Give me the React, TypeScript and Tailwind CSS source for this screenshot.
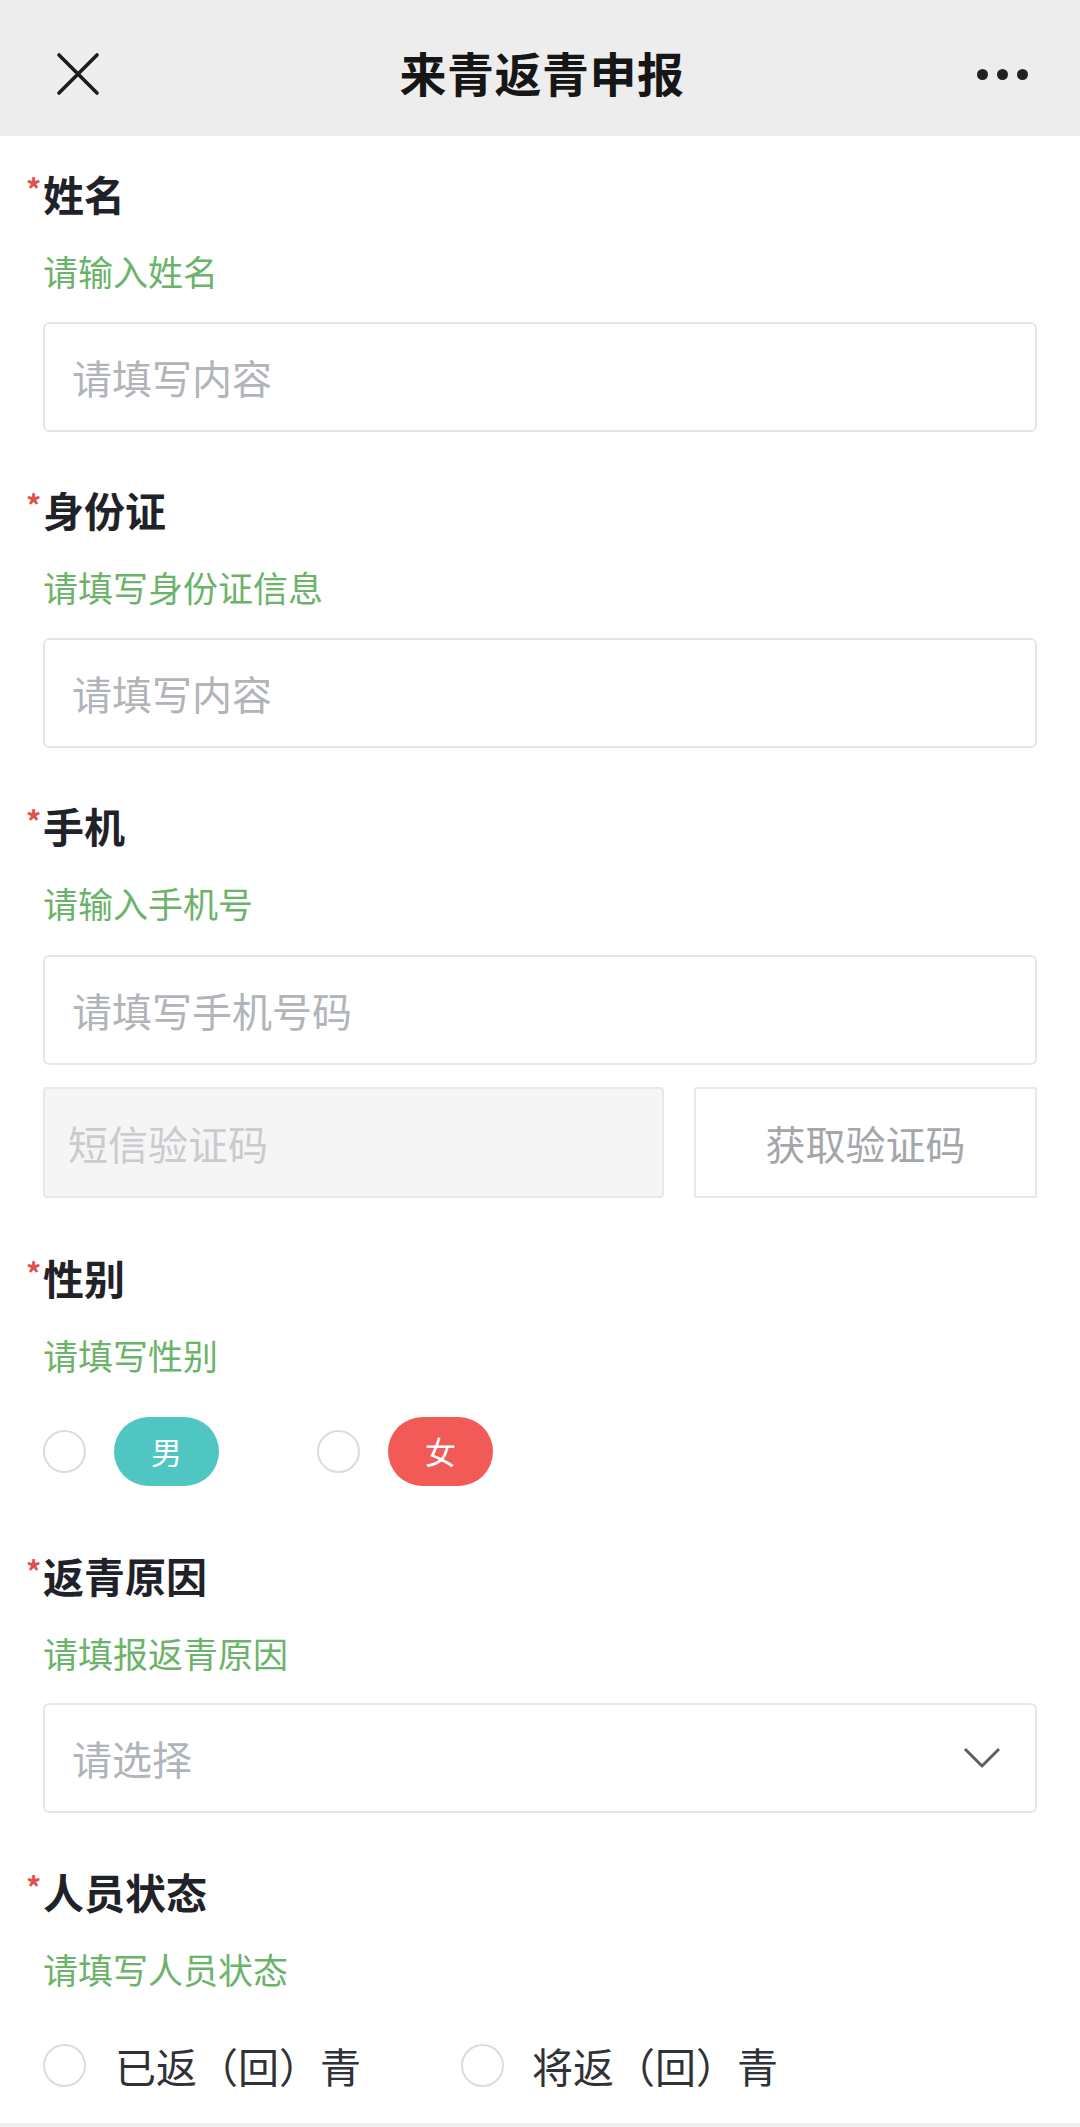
import { ReactNode } from 'react';

const font = { fontFamily: '"Noto Sans CJK SC", "Noto Sans", sans-serif' };

const Label = ({ text, className = '' }: { text: string; className?: string }) => (
  <div className={`-ml-[17px] flex items-start leading-[48px] ${className}`}>
    <span className="w-[17px] text-[30px] leading-[38px] text-[#e0504c] font-bold">*</span>
    <span className="text-[41px] font-bold text-[#1f2329]">{text}</span>
  </div>
);

const Hint = ({ text }: { text: string }) => (
  <div className="mt-[32px] text-[35px] leading-[44px] text-[#6cb36a]">{text}</div>
);

const TextBox = ({ placeholder, className = '' }: { placeholder: string; className?: string }) => (
  <input
    placeholder={placeholder}
    className={`block h-[110px] w-full rounded-[6px] border-2 border-[#e6e6e6] bg-white pl-[27px] text-[40px] text-[#333] outline-none placeholder:text-[#b1b4b9] ${className}`}
    style={font}
  />
);

const Radio = () => (
  <span className="block h-[43px] w-[43px] shrink-0 rounded-full border-2 border-[#dcdcdc] bg-white" />
);

const Field = ({ children, className = '' }: { children: ReactNode; className?: string }) => (
  <div className={className}>{children}</div>
);

export default function App() {
  return (
    <div className="min-h-[2127px] flex flex-col bg-white" style={font}>
      {/* Top bar */}
      <div className="h-[136px] shrink-0 bg-[#ededed] grid grid-cols-[1fr_auto_1fr] items-center pl-[56px] pr-[52px] pt-[9px]">
        <svg width="44" height="44" viewBox="0 0 44 44" className="mt-[2px]">
          <path d="M3 3 L41 41 M41 3 L3 41" stroke="#1c1c1c" strokeWidth="3.6" strokeLinecap="round" />
        </svg>
        <div className="text-[47px] font-semibold text-[#161616] tracking-[0.5px]">来青返青申报</div>
        <div className="flex justify-end gap-[9px] pt-[3px]">
          <span className="h-[11px] w-[11px] rounded-full bg-[#222]" />
          <span className="h-[11px] w-[11px] rounded-full bg-[#222]" />
          <span className="h-[11px] w-[11px] rounded-full bg-[#222]" />
        </div>
      </div>

      {/* Form */}
      <div className="flex-1 px-[43px] pt-[33px]">
        <Field>
          <Label text="姓名" />
          <Hint text="请输入姓名" />
          <TextBox placeholder="请填写内容" className="mt-[29px]" />
        </Field>

        <Field className="mt-[53px]">
          <Label text="身份证" />
          <Hint text="请填写身份证信息" />
          <TextBox placeholder="请填写内容" className="mt-[29px]" />
        </Field>

        <Field className="mt-[53px]">
          <Label text="手机" />
          <Hint text="请输入手机号" />
          <TextBox placeholder="请填写手机号码" className="mt-[30px]" />
          <div className="mt-[22px] flex gap-[30px]">
            <div className="h-[111px] w-[621px] rounded-[4px] border-2 border-[#e8e8e8] bg-[#f5f5f5] pl-[23px] flex items-center text-[40px] text-[#c9cbcf]">
              短信验证码
            </div>
            <button className="h-[111px] flex-1 rounded-[2px] border-2 border-[#e8e8e8] bg-white text-[40px] text-[#a3a6ab]">
              获取验证码
            </button>
          </div>
        </Field>

        <Field className="mt-[55px]">
          <Label text="性别" />
          <Hint text="请填写性别" />
          <div className="mt-[40px] flex items-center">
            <Radio />
            <span className="ml-[28px] flex h-[69px] w-[105px] items-center justify-center rounded-full bg-[#50c6c3] text-[31px] text-white">
              男
            </span>
            <span className="ml-[98px]">
              <Radio />
            </span>
            <span className="ml-[28px] flex h-[69px] w-[105px] items-center justify-center rounded-full bg-[#f15a57] text-[31px] text-white">
              女
            </span>
          </div>
        </Field>

        <Field className="mt-[65px]">
          <Label text="返青原因" />
          <Hint text="请填报返青原因" />
          <div className="mt-[28px] flex h-[110px] items-center justify-between rounded-[6px] border-2 border-[#e6e6e6] pl-[27px] pr-[34px]">
            <span className="text-[40px] text-[#b1b4b9]">请选择</span>
            <svg width="38" height="22" viewBox="0 0 38 22">
              <path d="M2 2 L19 19 L36 2" fill="none" stroke="#5a5e66" strokeWidth="3" strokeLinejoin="round" />
            </svg>
          </div>
        </Field>

        <Field className="mt-[54px]">
          <Label text="人员状态" />
          <Hint text="请填写人员状态" />
          <div className="mt-[52px] flex items-center">
            <Radio />
            <span className="ml-[29px] text-[41px] leading-[44px] text-[#2f3237]">已返（回）青</span>
            <span className="ml-[100px]">
              <Radio />
            </span>
            <span className="ml-[28px] text-[41px] leading-[44px] text-[#2f3237]">将返（回）青</span>
          </div>
        </Field>
      </div>
      <div className="h-[4px] bg-[#f0f0f0]" />
    </div>
  );
}
